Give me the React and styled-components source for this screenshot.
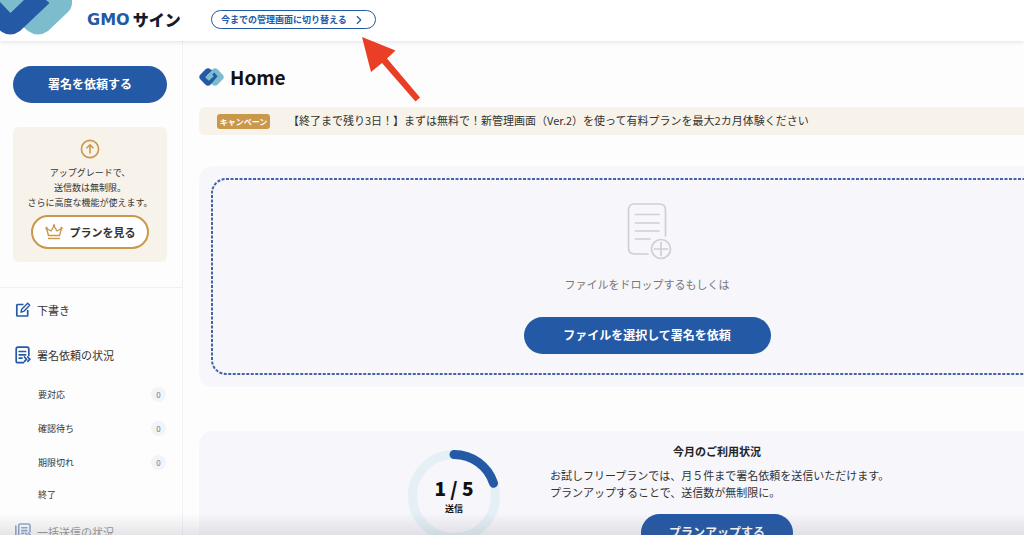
import styled, { createGlobalStyle } from "styled-components";
import { ChevronRight } from "lucide-react";

const BLUE = "#2459a6";
const TEAL = "#7cbccd";
const GOLD = "#c9984a";

const GlobalStyle = createGlobalStyle`
  * {
    box-sizing: border-box;
  }
  body {
    margin: 0;
    height: 100vh;
    overflow: hidden;
    background: #fdfdfe;
    color: #333;
    font-family: "Noto Sans CJK JP", sans-serif;
    font-size: 11px;
  }
  button {
    font-family: inherit;
    cursor: pointer;
  }
  a {
    color: inherit;
    text-decoration: none;
  }
  h1, h2, p, ul {
    margin: 0;
    padding: 0;
    list-style: none;
  }
  svg {
    display: block;
    flex: none;
  }
`;

const HeaderContainer = styled.header`
  position: relative;
  display: flex;
  align-items: flex-start;
  height: 41px;
  background: #fff;
  box-shadow: 0 1px 4px rgba(60, 60, 110, 0.14);
`;

const LogoLink = styled.a`
  display: flex;
  gap: 15px;
`;

const LogoText = styled.span`
  display: flex;
  align-items: center;
  gap: 3px;
  width: 109px;
  height: 38px;
  color: #16182b;
  font-size: 16px;
  font-weight: 900;
  white-space: nowrap;
`;

const LogoLatin = styled.span`
  color: ${BLUE};
  font-family: "DejaVu Sans", sans-serif;
  font-weight: 700;
`;

const SwitchButton = styled.button`
  display: flex;
  align-items: center;
  gap: 5px;
  height: 19px;
  margin: 10px 15px;
  padding: 0 9px;
  border: 1px solid ${BLUE};
  border-radius: 10px;
  background: #fff;
  color: ${BLUE};
  font-size: 9px;
  font-weight: 700;
  white-space: nowrap;
`;

const Layout = styled.div`
  display: flex;
  height: calc(100vh - 41px);
  overflow: hidden;
`;

const Sidebar = styled.aside`
  flex: none;
  width: 183px;
  height: 600px;
  padding-top: 25px;
  border-right: 1px solid #f0f0f6;
`;

const PrimaryButton = styled.button`
  display: block;
  width: ${(props) => props.$width};
  height: 37px;
  padding: 0 0 2px;
  border: 0;
  border-radius: 19px;
  background: ${BLUE};
  color: #fff;
  font-size: 12px;
  font-weight: 700;
`;

const SidebarTop = styled.div`
  display: flex;
  flex-direction: column;
  gap: 24px;
  padding: 0 15px 25px 13px;
  border-bottom: 1px solid #f0f0f6;
`;

const UpgradeCard = styled.section`
  display: flex;
  flex-direction: column;
  align-items: center;
  height: 135px;
  padding-top: 12px;
  border-radius: 6px;
  background: #f8f3ea;
`;

const UpgradeText = styled.p`
  margin: 6px 0 5px;
  font-size: 9px;
  line-height: 15px;
  text-align: center;
  white-space: nowrap;
`;

const PlanButton = styled.button`
  display: flex;
  align-items: center;
  justify-content: center;
  gap: 7px;
  width: 118px;
  height: 34px;
  border: 2px solid ${GOLD};
  border-radius: 17px;
  background: #fff;
  color: #333;
  font-size: 11px;
  font-weight: 700;
`;

const Menu = styled.nav`
  margin-top: -1px;
`;

const MenuLink = styled.a`
  display: flex;
  align-items: center;
  gap: 6px;
  height: 45px;
  padding-left: 15px;
  opacity: ${(props) => (props.$faded ? 0.5 : 1)};
`;

const SubLink = styled.a`
  display: flex;
  align-items: center;
  justify-content: space-between;
  height: ${(props) => (props.$last ? "30px" : "34px")};
  padding: 0 16px 0 38px;
  font-size: 9px;
`;

const CountBadge = styled.span`
  width: 15px;
  border-radius: 8px;
  background: #f3f3f8;
  color: #777;
  font-size: 8px;
  line-height: 15px;
  text-align: center;
`;

/* The dashboard is wider than the window and runs off its right edge. */
const Main = styled.main`
  flex: 1;
  min-width: 0;
  margin-right: -71px;
  padding: 22px 0 0 16px;
`;

const PageTitle = styled.h1`
  display: flex;
  align-items: center;
  gap: 6px;
  height: 27px;
  color: #111;
  font-size: 19px;
  line-height: 27px;
`;

const Banner = styled.a`
  display: flex;
  align-items: center;
  gap: 18px;
  height: 28px;
  margin: 17px 0 31px;
  padding-left: 18px;
  border-radius: 6px;
  background: #f8f3ea;
  line-height: 16px;
  white-space: nowrap;
`;

const BannerText = styled.span`
  padding-bottom: 2px;
`;

const CampaignTag = styled.span`
  width: 53px;
  border-radius: 3px;
  background: ${GOLD};
  color: #fff;
  font-size: 8px;
  font-weight: 700;
  line-height: 15px;
  text-align: center;
`;

const Panel = styled.section`
  border-radius: 14px;
  background: #f6f6fb;
`;

const UploadPanel = styled(Panel)`
  margin-bottom: 44px;
  padding: 12px;
`;

const DropZone = styled.div`
  position: relative;
  display: flex;
  flex-direction: column;
  align-items: center;
  height: 197px;
  padding-top: 25px;
`;

const DashedOutline = styled.svg`
  position: absolute;
  inset: 0;
  width: 100%;
  height: 100%;
  overflow: visible;
  pointer-events: none;
`;

const DropText = styled.p`
  margin: 16px 0 24px;
  color: #777;
  line-height: 17px;
`;

const UsagePanel = styled(Panel)`
  display: flex;
  justify-content: center;
  gap: 50px;
  height: 200px;
  padding: 12px 2px 0 0;
`;

const Ring = styled.div`
  display: grid;
  width: 92px;
  height: 92px;
  margin-top: 7px;

  > * {
    grid-area: 1 / 1;
  }
`;

const RingLabel = styled.div`
  display: flex;
  flex-direction: column;
  align-items: center;
  justify-content: center;
  color: #111;
  font-size: 9px;
  font-weight: 700;
  line-height: 17px;

  strong {
    font-size: 19px;
    line-height: 24px;
  }
`;

const UsageInfo = styled.div`
  display: flex;
  flex-direction: column;
  align-items: center;
  width: 334px;
`;

const UsageTitle = styled.h2`
  color: #222;
  font-size: 11px;
  line-height: 17px;
`;

const UsageText = styled.p`
  align-self: flex-start;
  margin: 7px 0 13px;
  line-height: 17px;
  white-space: nowrap;
`;

const ArrowOverlay = styled.svg`
  position: absolute;
  top: 36px;
  left: 361px;
  z-index: 2;
  pointer-events: none;
`;

const BottomShade = styled.div`
  position: fixed;
  right: 0;
  bottom: 0;
  left: 0;
  height: 22px;
  background: linear-gradient(rgba(90, 90, 100, 0), rgba(90, 90, 100, 0.14));
  pointer-events: none;
`;

const HeaderMark = () => (
  <svg width="72" height="35" viewBox="0 0 72 35" aria-hidden="true">
    <path
      fill={TEAL}
      d="M0 0H72V3Q72 8 68 12L48 31Q38 38 28 31L20 24L10 14L0 6Z"
    />
    <path
      fill={BLUE}
      d="M0 2L10.5 13L24 0H46L49.5 3L20 31Q11 37.500 2 32L0 30.500Z"
    />
  </svg>
);

const HomeMark = () => (
  <svg width="25" height="18" viewBox="0 0 25 18" aria-hidden="true">
    <path
      fill={TEAL}
      d="M13.500 1.200Q16 -0.800 18.500 1.200L24 7Q25.500 9 24 11L18.500 16.700Q16 18.700 13.500 16.700L11 14L8 9Z"
    />
    <path
      fill={BLUE}
      d="M6.500 1.200Q9 -0.800 11.500 1.200L13 2.500L8 7.500Q7 9 8.500 10.200L15.200 4.500L18.600 8.200L11.500 16.700Q9 18.700 6.500 16.700L1 11Q-0.500 9 1 7Z"
    />
    <path
      fill="none"
      stroke={TEAL}
      strokeWidth="2.600"
      d="M14.200 3.500L8 9.300L9.800 11L14 7.200"
    />
  </svg>
);

const UpIcon = () => (
  <svg width="20" height="20" viewBox="0 0 20 20" aria-hidden="true">
    <g fill="none" stroke={GOLD} strokeWidth="1.600">
      <circle cx="10" cy="10" r="8.600" />
      <path d="M10 14.500V6M6.500 9.200L10 5.800L13.500 9.200" />
    </g>
  </svg>
);

const CrownIcon = () => (
  <svg width="18" height="16" viewBox="0 0 18 16" aria-hidden="true">
    <g fill="none" stroke={GOLD} strokeWidth="1.400" strokeLinejoin="round">
      <path d="M3.500 11.500L1.500 4.500L6 7L9 2L12 7L16.500 4.500L14.500 11.500Z" />
      <path d="M3 14.500H15" />
    </g>
    <g fill={GOLD}>
      <circle cx="9" cy="1.500" r="1.200" />
      <circle cx="1.500" cy="4" r="1.200" />
      <circle cx="16.500" cy="4" r="1.200" />
    </g>
  </svg>
);

const DraftIcon = () => (
  <svg width="16" height="16" viewBox="0 0 16 16" aria-hidden="true">
    <g fill="none" stroke={BLUE} strokeWidth="1.700" strokeLinejoin="round">
      <path d="M8.500 2.500H2.500Q1.800 2.500 1.800 3.200V13.300Q1.800 14 2.500 14H12Q12.700 14 12.700 13.300V8" />
      <path
        d="M6 10.200L6.700 7.200L12.700 1.300L14.700 3.300L8.900 9.300Z"
        strokeWidth="1.400"
      />
    </g>
  </svg>
);

const StatusIcon = () => (
  <svg width="16" height="18" viewBox="0 0 16 18" aria-hidden="true">
    <g fill="none" stroke={BLUE} strokeWidth="1.700" strokeLinecap="round">
      <path d="M8.500 16.700H3Q1.200 16.700 1.200 14.900V3Q1.200 1.200 3 1.200H12Q13.800 1.200 13.800 3V9.500" />
      <path d="M4.200 5.500H10.600M4.200 8.800H10.600M4.200 12.100H7" />
      <path d="M9.500 11L11.500 13.200L9.500 15.400M12.800 11L14.800 13.200L12.800 15.400" />
    </g>
  </svg>
);

const BulkIcon = () => (
  <svg width="16" height="18" viewBox="0 0 16 18" aria-hidden="true">
    <g
      fill="none"
      stroke={BLUE}
      strokeWidth="1.600"
      strokeLinecap="round"
    >
      <path d="M0.800 3V15.500Q0.800 17 2.500 17H10" />
      <path d="M10 13.800H5.200Q3.700 13.800 3.700 12.300V2.500Q3.700 1 5.200 1H13.500Q15 1 15 2.500V9" />
      <path d="M6.700 4.800H12M6.700 7.600H12M6.700 10.400H8.500" />
      <path d="M10.500 10L12.200 12L10.500 14M13.500 10L15.200 12L13.500 14" />
    </g>
  </svg>
);

const FileIcon = () => (
  <svg width="44" height="57" viewBox="-2 0 44 57" overflow="visible" aria-hidden="true">
    <g fill="none" stroke="#cfcfd4" strokeWidth="1.700" strokeLinecap="round">
      <path d="M21 51H7.500Q1.500 51 1.500 45V7Q1.500 1 7.500 1H32.500Q38.500 1 38.500 7V33" />
      <path d="M8.500 11.500H32M8.500 20H32M8.500 28H32M8.500 36H23" />
      <circle cx="34" cy="46" r="9.500" />
      <path d="M27.500 46H40.500M34 39.500V52.500" />
    </g>
  </svg>
);

const UsageRing = () => (
  <Ring>
    <svg width="92" height="92" viewBox="0 0 92 92" aria-hidden="true">
      <g fill="none" strokeWidth="9">
        <circle cx="46" cy="46" r="41.500" stroke="#e4eff6" />
        <path
          d="M46 4.500A41.500 41.500 0 0 1 85.500 33.200"
          stroke={BLUE}
          strokeLinecap="round"
        />
      </g>
    </svg>
    <RingLabel>
      <strong>1 / 5</strong>
      送信
    </RingLabel>
  </Ring>
);

const statuses = [
  { label: "要対応", count: 0 },
  { label: "確認待ち", count: 0 },
  { label: "期限切れ", count: 0 },
  { label: "終了" },
];

function Header() {
  return (
    <HeaderContainer>
      <LogoLink href="#">
        <HeaderMark />
        <LogoText>
          <LogoLatin>GMO</LogoLatin>サイン
        </LogoText>
      </LogoLink>
      <SwitchButton type="button">
        今までの管理画面に切り替える
        <ChevronRight size={14} strokeWidth={2} />
      </SwitchButton>
      <ArrowOverlay width="60" height="66" viewBox="0 0 60 66" aria-hidden="true">
        <path
          fill="#ea3e26"
          d="M1 1L34.500 14.500L26 22.500L59 61.500L54.500 65.500L21 27L10 36Z"
        />
      </ArrowOverlay>
    </HeaderContainer>
  );
}

function SideMenu() {
  return (
    <Sidebar>
      <SidebarTop>
        <PrimaryButton type="button" $width="100%">
          署名を依頼する
        </PrimaryButton>
        <UpgradeCard>
          <UpIcon />
          <UpgradeText>
            アップグレードで、
            <br />
            送信数は無制限。
            <br />
            さらに高度な機能が使えます。
          </UpgradeText>
          <PlanButton type="button">
            <CrownIcon />
            プランを見る
          </PlanButton>
        </UpgradeCard>
      </SidebarTop>
      <Menu>
        <MenuLink href="#">
          <DraftIcon />
          下書き
        </MenuLink>
        <MenuLink href="#">
          <StatusIcon />
          署名依頼の状況
        </MenuLink>
        <ul>
          {statuses.map(({ label, count }) => (
            <li key={label}>
              <SubLink href="#" $last={count === undefined}>
                {label}
                {count !== undefined && <CountBadge>{count}</CountBadge>}
              </SubLink>
            </li>
          ))}
        </ul>
        <MenuLink href="#" $faded>
          <BulkIcon />
          一括送信の状況
        </MenuLink>
      </Menu>
    </Sidebar>
  );
}

function App() {
  return (
    <>
      <GlobalStyle />
      <Header />
      <Layout>
        <SideMenu />
        <Main>
          <PageTitle>
            <HomeMark />
            Home
          </PageTitle>
          <Banner href="#">
            <CampaignTag>キャンペーン</CampaignTag>
            <BannerText>
              【終了まで残り3日！】まずは無料で！新管理画面（Ver.2）を使って有料プランを最大2カ月体験ください
            </BannerText>
          </Banner>
          <UploadPanel>
            <DropZone>
              <DashedOutline aria-hidden="true">
                <rect
                  x="1"
                  y="1"
                  width="99.8%"
                  height="99%"
                  rx="14"
                  fill="none"
                  stroke="#4564a8"
                  strokeWidth="2"
                  strokeDasharray="3 1.500"
                />
              </DashedOutline>
              <FileIcon />
              <DropText>ファイルをドロップするもしくは</DropText>
              <PrimaryButton type="button" $width="247px">
                ファイルを選択して署名を依頼
              </PrimaryButton>
            </DropZone>
          </UploadPanel>
          <UsagePanel>
            <UsageRing />
            <UsageInfo>
              <UsageTitle>今月のご利用状況</UsageTitle>
              <UsageText>
                お試しフリープランでは、月５件まで署名依頼を送信いただけます。
                <br />
                プランアップすることで、送信数が無制限に。
              </UsageText>
              <PrimaryButton type="button" $width="152px">
                プランアップする
              </PrimaryButton>
            </UsageInfo>
          </UsagePanel>
        </Main>
      </Layout>
      <BottomShade />
    </>
  );
}

export default App;
